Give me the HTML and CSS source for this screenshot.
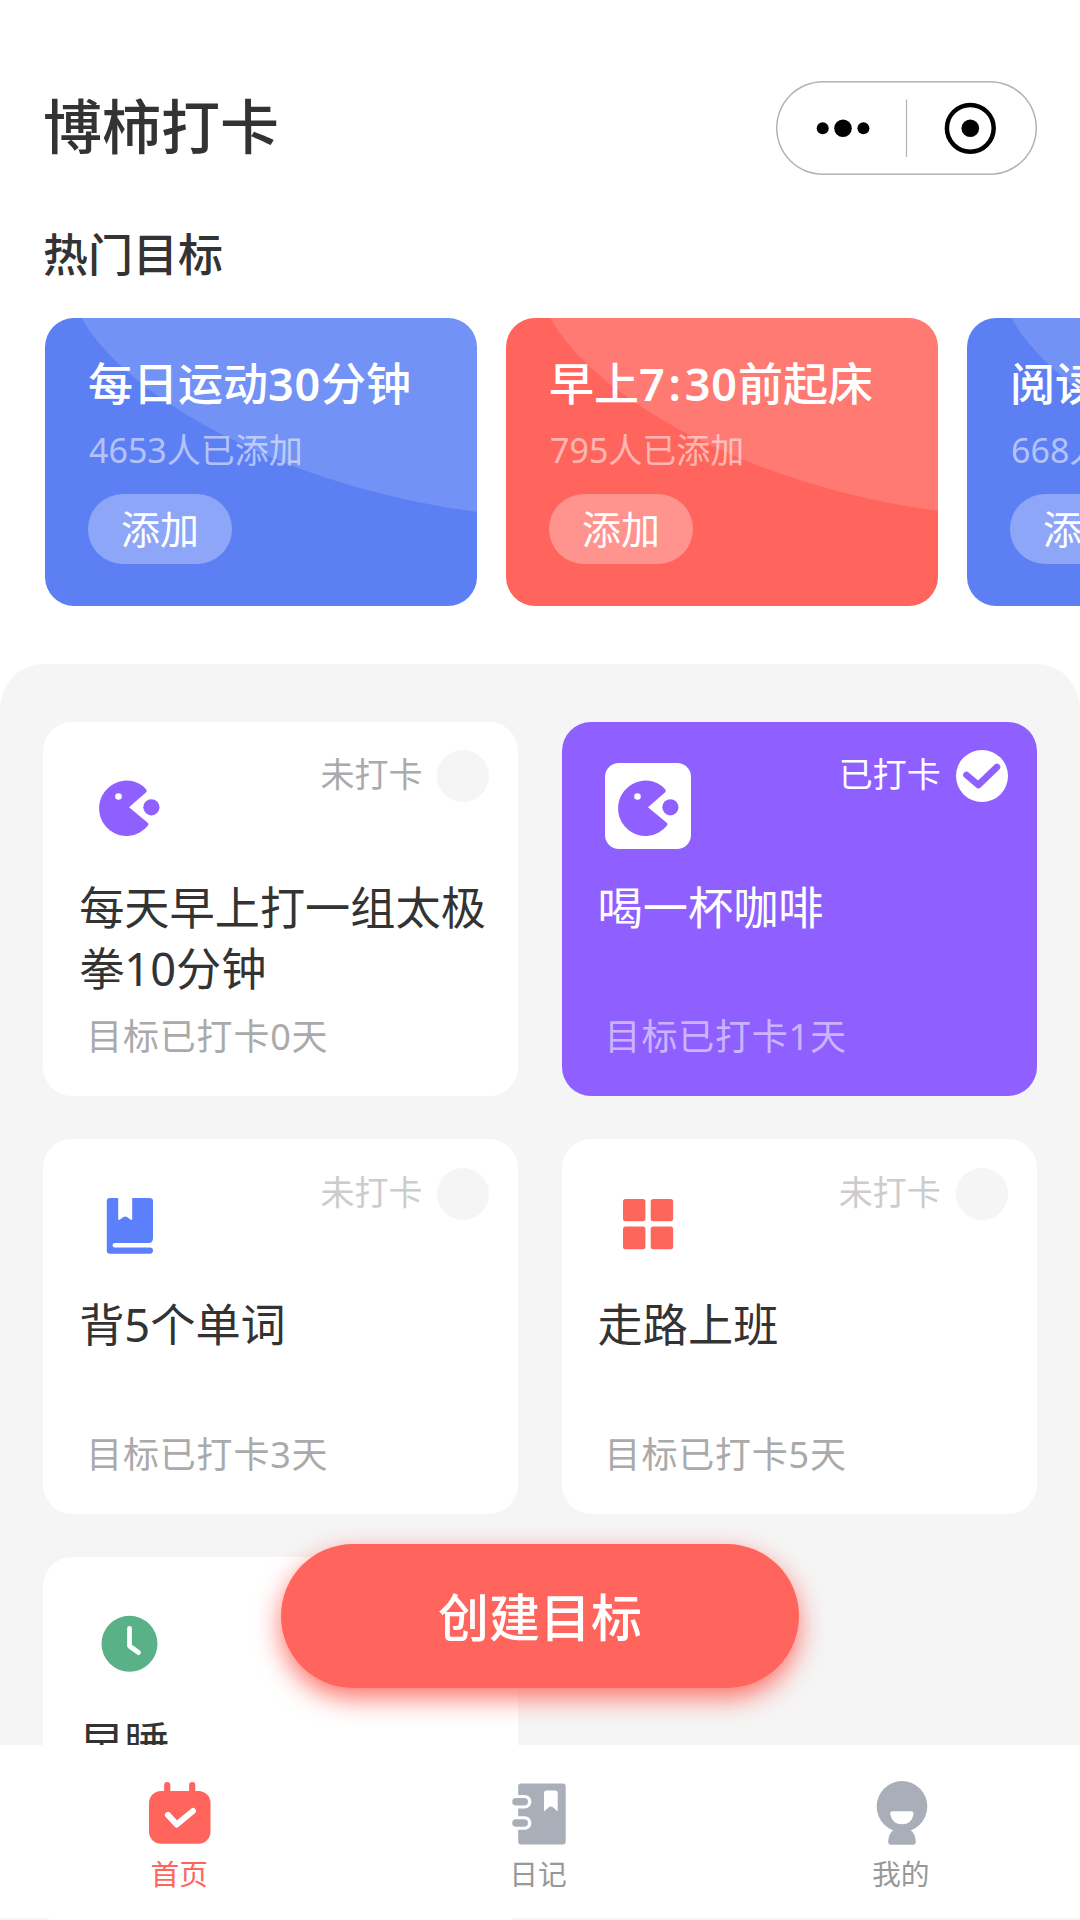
FILE: index.html
```html
<!DOCTYPE html>
<html lang="zh-CN">
<head>
  <meta charset="UTF-8" />
  <meta name="viewport" content="width=device-width, initial-scale=1.0" />
  <title>博柿打卡</title>
  <link rel="stylesheet" href="styles.css">
</head>
<body>
  <!-- Shared icons -->
  <svg class="sprite" aria-hidden="true">
    <symbol id="icon-eat" viewBox="0 0 86 86">
      <path d="M60.300 26.500Q61.500 28 60.200 29.300L43 44.200L62 60Q63 61.300 62 62.600A27.500 27.700 0 1 1 57.500 23.500Z" fill="#8f5fff" />
      <circle cx="32.500" cy="33.500" r="3.300" fill="#fff" />
      <circle cx="65.400" cy="44.300" r="8.100" fill="#8f5fff" />
    </symbol>
    <symbol id="wave-a" viewBox="0 0 432 288">
      <path d="M36.500 0C75 70 220 165 432 194V0Z" fill="#fff" fill-opacity="0.14" />
    </symbol>
    <symbol id="wave-b" viewBox="0 0 432 288">
      <path d="M44.500 0C83 72 228 165 433 193V0Z" fill="#fff" fill-opacity="0.14" />
    </symbol>
  </svg>

  <div class="page">
    <!-- Header -->
    <header class="header">
      <h1>博柿打卡</h1>
      <div class="capsule">
        <svg width="260" height="94" viewBox="0 0 260 94">
          <circle cx="46.700" cy="47.300" r="6" />
          <circle cx="67" cy="47.300" r="8.800" />
          <circle cx="87.400" cy="47.300" r="6" />
          <path d="M130.500 18.500V76" stroke="#b2b2b2" stroke-width="1.200" />
          <circle cx="194.300" cy="47.300" r="23.400" fill="none" stroke="#000" stroke-width="4.500" />
          <circle cx="194.300" cy="47.300" r="8.800" />
        </svg>
      </div>
    </header>

    <!-- Hot goals -->
    <h2>热门目标</h2>
    <div class="hot-list">
      <div class="hot-card blue">
        <svg class="wave"><use href="#wave-a" /></svg>
        <h3>每日运动<span class="num">30</span>分钟</h3>
        <p>4653人已添加</p>
        <button>添加</button>
      </div>
      <div class="hot-card red">
        <svg class="wave"><use href="#wave-b" /></svg>
        <h3>早上<span class="num">7<span class="colon">:</span>30</span>前起床</h3>
        <p>795人已添加</p>
        <button>添加</button>
      </div>
      <div class="hot-card blue">
        <svg class="wave"><use href="#wave-b" /></svg>
        <h3>阅读<span class="num">30</span>分钟</h3>
        <p>668人已添加</p>
        <button>添加</button>
      </div>
    </div>

    <!-- My goals -->
    <main class="panel">
      <div class="goal">
        <div class="goal-top">
          <svg class="goal-icon"><use href="#icon-eat" /></svg>
          <div class="status dark"><span>未打卡</span><i class="dot"></i></div>
        </div>
        <div class="goal-name">每天早上打一组太极拳10分钟</div>
        <div class="goal-days">目标已打卡0天</div>
      </div>

      <div class="goal done">
        <div class="goal-top">
          <svg class="goal-icon"><use href="#icon-eat" /></svg>
          <div class="status"><span>已打卡</span><i class="dot">
            <svg width="52" height="52" viewBox="0 0 52 52">
              <path d="M10.500 25L22.300 35L41 17" fill="none" stroke="#8f5fff" stroke-width="6.600" stroke-linecap="round" stroke-linejoin="round" />
            </svg></i></div>
        </div>
        <div class="goal-name">喝一杯咖啡</div>
        <div class="goal-days">目标已打卡1天</div>
      </div>

      <div class="goal">
        <div class="goal-top">
          <svg class="goal-icon" viewBox="0 0 86 86">
            <path d="M24 17H32.200V38Q32.500 39.500 34 38.500L37.500 36Q39.300 34.800 41 36L44.500 38.500Q46 39.500 46.200 38V17H63.500Q67 17 67 20V57Q67 62 62.500 62H29Q26.500 62 26.500 64.300Q26.500 66.600 29 66.600H64Q67 66.600 67 69.600Q67 72.700 64 72.700H24Q20.800 72.700 20.800 69.500V20Q20.800 17 24 17Z" fill="#5c80fb" />
          </svg>
          <div class="status"><span>未打卡</span><i class="dot"></i></div>
        </div>
        <div class="goal-name">背5个单词</div>
        <div class="goal-days">目标已打卡3天</div>
      </div>

      <div class="goal">
        <div class="goal-top">
          <svg class="goal-icon" viewBox="0 0 86 86" fill="#fc665b">
            <rect x="18" y="18" width="22.400" height="22.300" rx="2.500" />
            <rect x="45.700" y="18" width="22.400" height="22.300" rx="2.500" />
            <rect x="18" y="45.600" width="22.400" height="22.600" rx="2.500" />
            <rect x="45.700" y="45.600" width="22.400" height="22.600" rx="2.500" />
          </svg>
          <div class="status"><span>未打卡</span><i class="dot"></i></div>
        </div>
        <div class="goal-name">走路上班</div>
        <div class="goal-days">目标已打卡5天</div>
      </div>

      <div class="goal">
        <div class="goal-top">
          <svg class="goal-icon" viewBox="0 0 86 86">
            <circle cx="43.500" cy="44.800" r="28" fill="#5ab187" />
            <path d="M43.500 29.500V47L52.500 53.500" fill="none" stroke="#fff" stroke-width="4.800" stroke-linecap="round" stroke-linejoin="round" />
          </svg>
          <div class="status"><span>未打卡</span><i class="dot"></i></div>
        </div>
        <div class="goal-name">早睡</div>
        <div class="goal-days">目标已打卡0天</div>
      </div>
    </main>
  </div>

  <button class="create">创建目标</button>

  <!-- Tab bar -->
  <nav class="tabbar">
    <a class="tab active">
      <svg width="64" height="64" viewBox="0 0 64 64">
        <path d="M20.200 4V14M45.200 4V14" stroke="#ff655c" stroke-width="6.200" stroke-linecap="round" />
        <rect x="2" y="10" width="61.500" height="52.800" rx="12" fill="#ff655c" />
        <path d="M21 34L29.700 43.500L46 30" fill="none" stroke="#fff" stroke-width="6" stroke-linecap="round" stroke-linejoin="round" />
      </svg>
      首页
    </a>
    <a class="tab diary">
      <svg width="64" height="64" viewBox="0 0 64 64">
        <rect x="12.200" y="2.500" width="47.500" height="61" rx="3" fill="#a9aeb8" />
        <path d="M9.700 20.800H18.700M9.700 42H18.700" stroke="#fff" stroke-width="13.500" stroke-linecap="round" />
        <path d="M10 20.800H18.200M10 42H18.200" stroke="#a9aeb8" stroke-width="7.500" stroke-linecap="round" />
        <path d="M40.200 9.500H49.200Q51.700 9.500 51.700 12V30.500L47.200 26.500Q44.900 24.500 42.600 26.500L38 30.500V12Q38 9.500 40.200 9.500Z" fill="#fff" />
      </svg>
      日记
    </a>
    <a class="tab">
      <svg width="64" height="64" viewBox="0 0 64 64">
        <ellipse cx="33" cy="25.500" rx="25.300" ry="25.500" fill="#a9aeb8" />
        <path d="M24.500 49H41.500Q46.800 53 46.800 61Q46.800 63.700 44 63.700H22Q19.200 63.700 19.200 61Q19.200 53 24.500 49Z" fill="#a9aeb8" />
        <path d="M23.500 30.300H42Q44.800 30.300 44.500 33.500Q42.500 43.300 33 43.300Q23.500 43.300 21.300 33.500Q21 30.300 23.500 30.300Z" fill="#fff" />
      </svg>
      我的
    </a>
  </nav>
</body>
</html>
```
FILE: styles.css
```css
/* Basic Reset */
* {
  margin: 0;
  padding: 0;
  box-sizing: border-box;
}
body {
  font-family: "Noto Sans", "Noto Sans CJK SC", sans-serif;
  background: #fff;
  color: #333;
  overflow: hidden;
}
button {
  border: none;
  font-family: inherit;
  color: #fff;
}
.sprite {
  display: none;
}
.page {
  height: 1920px;
  overflow: hidden;
}
/* Header */
.header {
  display: flex;
  justify-content: space-between;
  padding: 81px 43px 0 43px;
}
h1 {
  font-size: 59px;
  font-weight: 500;
  line-height: 90px;
}
.capsule {
  width: 261px;
  height: 94px;
  border-radius: 47px;
  box-shadow: inset 0 0 0 1.5px #b2b2b2;
}
.capsule svg {
  display: block;
}
h2 {
  margin: 50px 0 0 43px;
  font-size: 45px;
  font-weight: 500;
  line-height: 60px;
}
/* Hot goals */
.hot-list {
  display: flex;
  gap: 29px;
  margin-top: 33px;
  padding-left: 45px;
  overflow: hidden;
}
.hot-card {
  position: relative;
  flex: none;
  width: 432px;
  height: 288px;
  padding: 36px 43px;
  border-radius: 29px;
  color: #fff;
  overflow: hidden;
}
.hot-card.blue {
  background: #5c80f4;
}
.hot-card.red {
  background: #ff655c;
}
.wave {
  position: absolute;
  top: 0;
  left: 0;
  width: 432px;
  height: 288px;
}
.hot-card h3,
.hot-card p,
.hot-card button {
  position: relative;
}
.hot-card h3 {
  font-size: 45px;
  font-weight: 500;
  line-height: 60px;
  white-space: nowrap;
}
.num {
  font-weight: 600;
  letter-spacing: 0.8px;
}
.colon {
  margin: 0 3px;
}
.hot-card p {
  margin-top: 13px;
  padding-left: 1px;
  font-size: 34px;
  line-height: 46px;
  color: rgba(255, 255, 255, 0.55);
}
.hot-card button {
  display: block;
  width: 144px;
  height: 70px;
  margin-top: 21px;
  border-radius: 35px;
  background: rgba(255, 255, 255, 0.3);
  font-size: 39px;
  line-height: 70px;
}
/* My goals */
.panel {
  display: grid;
  grid-template-columns: 475px 475px;
  gap: 43.2px 43.4px;
  margin-top: 58px;
  padding: 57.6px 43.2px 200px;
  border-radius: 44px 44px 0 0;
  background: #f5f5f5;
}
.goal {
  height: 374.4px;
  padding: 28.8px 28.8px 0 36px;
  border-radius: 29px;
  background: #fff;
}
.goal-top {
  display: flex;
  justify-content: space-between;
}
.goal-icon {
  width: 86px;
  height: 86px;
  margin: 13px 0 0 7px;
  border-radius: 14px;
  background: #fff;
}
.status {
  display: flex;
  height: 52px;
  gap: 15px;
  font-size: 34px;
  line-height: 48px;
  color: #ccc;
}
.status.dark {
  color: #aaa;
}
.dot {
  width: 52px;
  height: 52px;
  border-radius: 50%;
  background: #f5f5f5;
}
.dot svg {
  display: block;
}
.goal-name {
  width: 408px;
  height: 122px;
  margin-top: 27.5px;
  font-size: 45.2px;
  line-height: 61px;
}
.goal-days {
  margin: 14.5px 0 0 7px;
  font-size: 36px;
  letter-spacing: 0.8px;
  line-height: 48px;
  color: #aaa;
}
.goal.done {
  background: #8f5fff;
  color: #fff;
}
.done .status {
  color: #fff;
}
.done .dot {
  background: #fff;
}
.done .goal-days {
  color: rgba(255, 255, 255, 0.55);
}
/* Create button */
.create {
  position: fixed;
  left: 281px;
  bottom: 232px;
  width: 518px;
  height: 144px;
  padding-bottom: 3px;
  border-radius: 72px;
  background: #ff655c;
  box-shadow: 0 10px 26px rgba(255, 101, 92, 0.9);
  font-size: 51px;
  font-weight: 500;
}
/* Tab bar */
.tabbar {
  position: fixed;
  left: 0;
  right: 0;
  bottom: 2px;
  display: flex;
  height: 173px;
  padding-top: 36px;
  background: #fff;
}
.tab {
  display: flex;
  flex: 1;
  flex-direction: column;
  align-items: center;
  gap: 9px;
  font-size: 28.8px;
  line-height: 40px;
  color: #999;
}
.tab.active {
  color: #ff655c;
}
.tab.diary {
  padding-right: 4px;
}
```
